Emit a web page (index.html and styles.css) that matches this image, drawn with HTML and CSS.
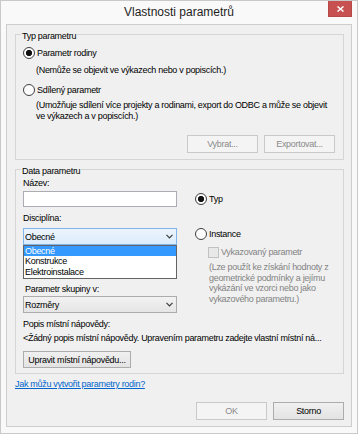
FILE: index.html
```html
<!DOCTYPE html>
<html lang="cs">
<head>
    <meta charset="UTF-8">
    <meta name="viewport" content="width=device-width, initial-scale=1.0">
    <title>Vlastnosti parametrů</title>
    <link rel="stylesheet" href="styles.css">
</head>
<body>
    <div class="window">
        <div class="titlebar">
            <span class="title">Vlastnosti parametrů</span>
            <button class="close-btn" aria-label="Zavřít">
                <svg width="7" height="6" viewBox="0 0 7 6"><path d="M0.5 0.5 L6.5 5.5 M6.5 0.5 L0.5 5.5" stroke="#fff" stroke-width="1.5" fill="none"/></svg>
            </button>
        </div>

        <div class="client">
            <!-- Typ parametru -->
            <fieldset class="group group-type">
                <legend>Typ parametru</legend>
                <label class="radio-row"><input class="radio" type="radio" name="ptype" checked> Parametr rodiny</label>
                <p class="hint">(Nemůže se objevit ve výkazech nebo v popiscích.)</p>
                <label class="radio-row shared"><input class="radio" type="radio" name="ptype"> Sdílený parametr</label>
                <p class="hint tight">(Umožňuje sdílení více projekty a rodinami, export do ODBC a může se objevit<br>ve výkazech a v popiscích.)</p>
                <div class="btn-row">
                    <button class="btn" disabled>Vybrat...</button>
                    <button class="btn" disabled>Exportovat...</button>
                </div>
            </fieldset>

            <!-- Data parametru -->
            <fieldset class="group group-data">
                <legend>Data parametru</legend>
                <div class="data-grid">
                    <div class="col-left">
                        <div class="field-label">Název:</div>
                        <input class="textbox" type="text">
                        <div class="field-label disc">Disciplína:</div>
                        <div class="combo-wrap">
                            <div class="combo hot">
                                <span>Obecné</span>
                                <svg width="7" height="5" viewBox="0 0 7 5"><path d="M0.5 0.8 L3.5 3.8 L6.5 0.8" stroke="#3a3a3a" stroke-width="1.2" fill="none"/></svg>
                            </div>
                            <ul class="dropdown">
                                <li class="selected">Obecné</li>
                                <li>Konstrukce</li>
                                <li>Elektroinstalace</li>
                            </ul>
                        </div>
                        <div class="field-label group-by">Parametr skupiny v:</div>
                        <div class="combo">
                            <span>Rozměry</span>
                            <svg width="7" height="5" viewBox="0 0 7 5"><path d="M0.5 0.8 L3.5 3.8 L6.5 0.8" stroke="#3a3a3a" stroke-width="1.2" fill="none"/></svg>
                        </div>
                    </div>
                    <div class="col-right">
                        <label class="radio-row typ"><input class="radio" type="radio" name="scope" checked> Typ</label>
                        <label class="radio-row instance"><input class="radio" type="radio" name="scope"> Instance</label>
                        <label class="check-row"><input class="check" type="checkbox" disabled> Vykazovaný parametr</label>
                        <p class="hint grey">(Lze použít ke získání hodnoty z<br>geometrické podmínky a jejímu<br>vykázání ve vzorci nebo jako<br>vykazového parametru.)</p>
                    </div>
                </div>
                <div class="field-label tip-label">Popis místní nápovědy:</div>
                <div class="tip-text">&lt;Žádný popis místní nápovědy. Upravením parametru zadejte vlastní místní ná...</div>
                <button class="btn edit-tip">Upravit místní nápovědu...</button>
            </fieldset>

            <a class="help-link" href="#">Jak můžu vytvořit parametry rodin?</a>

            <div class="dialog-buttons">
                <button class="btn" disabled>OK</button>
                <button class="btn">Storno</button>
            </div>
        </div>
    </div>
</body>
</html>
```

FILE: styles.css
```css
* {
    box-sizing: border-box;
}
body {
    margin: 0;
    font-family: "Liberation Sans", Arial, sans-serif;
    font-size: 9px;
    letter-spacing: -0.3px;
    color: #000;
    background: #fff;
}
.window {
    width: 358px;
    height: 434px;
    display: flex;
    flex-direction: column;
    padding: 0 5px 6px;
    background: #f9f9f9;
    border: 1px solid #c9c9c9;
}
.titlebar {
    height: 23px;
    flex-shrink: 0;
    display: grid;
    grid-template-columns: 1fr auto 1fr;
}
.title {
    grid-column: 2;
    font-size: 12px;
    line-height: 23px;
    letter-spacing: 0;
    color: #1e1e1e;
}
.close-btn {
    grid-column: 3;
    justify-self: end;
    width: 24px;
    height: 16px;
    padding: 0;
    border: 1px solid #b84848;
    border-top: none;
    background: #c75050;
    display: flex;
    align-items: center;
    justify-content: center;
}
.client {
    flex: 1;
    display: flex;
    flex-direction: column;
    background: #f0f0f0;
    border: 1px solid #cdcdcd;
    padding: 0 7px 6px 8px;
}

/* group boxes */
.group {
    margin: 2px 0 0;
    border: 1px solid #d5d5d5;
    padding: 4px 8px 6px 7px;
    min-width: 0;
}
.group legend {
    padding: 3px 1px 0;
    margin-left: -2px;
    line-height: 12px;
}
.group-data {
    padding-top: 0;
    padding-bottom: 5px;
}

/* radios and checkbox */
.radio-row {
    display: flex;
    align-items: center;
    gap: 2px;
    height: 14px;
}
.radio {
    appearance: none;
    margin: 0;
    width: 12px;
    height: 12px;
    flex-shrink: 0;
    border: 1px solid #3f3f3f;
    border-radius: 50%;
    background: #fcfcfc;
}
.radio:checked {
    background: radial-gradient(circle, #111 0 2.8px, #fcfcfc 3.4px);
}
.radio-row.shared {
    margin-top: 7px;
}
.check-row {
    display: flex;
    align-items: center;
    gap: 2px;
    height: 12px;
    margin: 5px 0 0 13px;
    color: #838383;
}
.check {
    appearance: none;
    margin: 0;
    width: 11px;
    height: 11px;
    border: 1px solid #c2c2c2;
    background: #e8e8e8;
}

.hint {
    margin: 5px 0 0 13px;
    line-height: 11px;
    white-space: nowrap;
}
.hint.tight {
    margin-top: 3px;
}
.hint.grey {
    margin: 4px 0 0 14px;
    line-height: 10.7px;
    color: #838383;
}

/* buttons */
.btn {
    font: inherit;
    letter-spacing: inherit;
    height: 18px;
    padding: 0 6px;
    border: 1px solid #acacac;
    background: linear-gradient(#f0f0f0, #e3e3e3);
    color: #000;
}
.btn:disabled {
    border-color: #c9c9c9;
    background: #f4f4f4;
    color: #8a8a8a;
}
.btn-row {
    display: flex;
    justify-content: flex-end;
    gap: 6px;
    margin-top: 13px;
}
.btn-row .btn, .dialog-buttons .btn {
    width: 71px;
}

/* data group */
.data-grid {
    display: grid;
    grid-template-columns: 154px 1fr;
    column-gap: 18px;
}
.field-label {
    line-height: 12px;
}
.field-label.disc {
    margin-top: 5px;
}
.field-label.group-by {
    margin-top: 38px;
    padding-left: 2px;
}
.textbox {
    display: block;
    width: 100%;
    height: 16px;
    margin: 2px 0 0;
    border: 1px solid #abadb3;
    background: #fff;
}
.combo-wrap {
    position: relative;
    margin-top: 4px;
}
.combo {
    height: 17px;
    display: flex;
    align-items: center;
    justify-content: space-between;
    padding: 0 3px 0 1px;
    border: 1px solid #acacac;
    background: linear-gradient(#f2f2f2, #e5e5e5);
}
.combo.hot {
    border-color: #7eb4ea;
    background: linear-gradient(#ecf4fc, #dcecfc);
}
.combo-wrap + .field-label + .combo {
    margin-top: 1px;
}
.dropdown {
    position: absolute;
    top: 100%;
    left: 0;
    width: 100%;
    margin: 0;
    padding: 0 0 1px;
    list-style: none;
    background: #fff;
    border: 1px solid #646464;
    z-index: 2;
}
.dropdown li {
    line-height: 10.3px;
    padding-left: 1px;
}
.dropdown li.selected {
    background: #3399ff;
    color: #fff;
}
.radio-row.typ {
    margin-top: 15px;
}
.radio-row.instance {
    margin-top: 21px;
}
.tip-label {
    margin-top: 5px;
}
.tip-text {
    margin-top: 2px;
    line-height: 12px;
    white-space: nowrap;
}
.btn.edit-tip {
    display: block;
    width: 108px;
    height: 17px;
    margin-top: 7px;
    padding: 0;
}

.help-link {
    margin-top: 4px;
    line-height: 12px;
    color: #0066cc;
    align-self: flex-start;
}
.dialog-buttons {
    margin-top: auto;
    display: flex;
    justify-content: flex-end;
    gap: 6px;
}
```
